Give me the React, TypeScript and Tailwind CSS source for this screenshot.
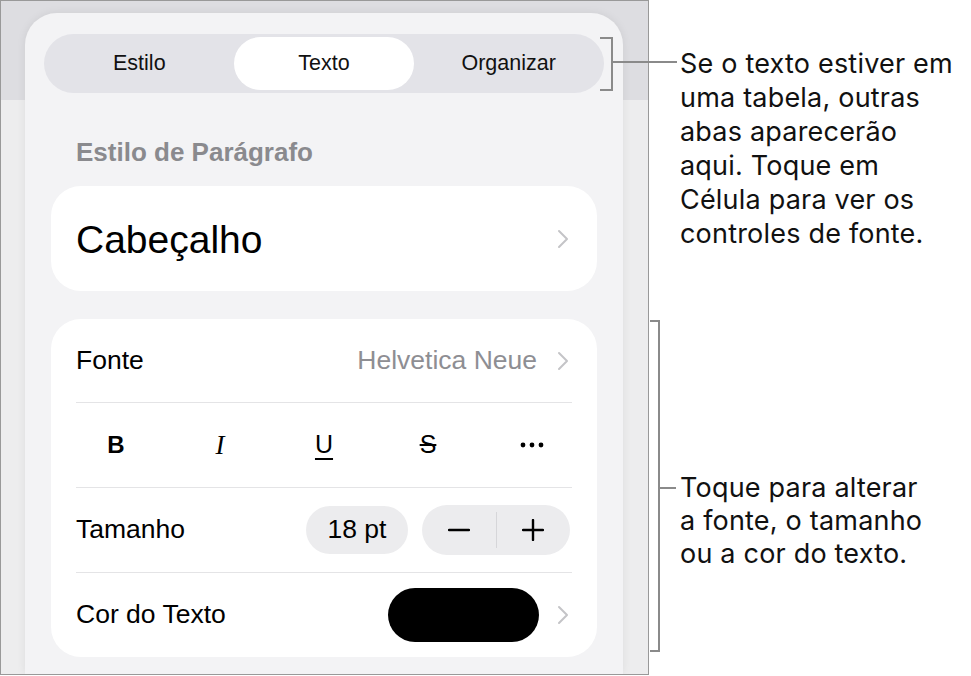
import React from 'react';

const ui = { fontFamily: '"Liberation Sans", Arial, sans-serif' };
const note = { fontFamily: 'Inter, "Noto Sans", sans-serif' };

function Chevron() {
  return (
    <svg width="12" height="20" viewBox="0 0 12 20" className="shrink-0">
      <path d="M2 2 L10 10 L2 18" fill="none" stroke="#c4c4c7" strokeWidth="2" strokeLinecap="round" strokeLinejoin="round" />
    </svg>
  );
}

function Divider() {
  return <div className="mx-[25px] h-px bg-[#e4e4e6]" />;
}

function Segmented() {
  const tabs = ['Estilo', 'Texto', 'Organizar'];
  return (
    <div className="mx-[19px] mt-[21px] grid h-[59px] grid-cols-3 rounded-full bg-[#e3e3e8] p-[3px]">
      {tabs.map((t) => (
        <div
          key={t}
          className={
            t === 'Texto'
              ? 'mx-[2px] flex items-center justify-center rounded-full bg-white text-[21.5px] text-[#111]'
              : 'flex items-center justify-center text-[21.5px] text-[#111]'
          }
        >
          {t}
        </div>
      ))}
    </div>
  );
}

function StyleButtons() {
  return (
    <div className="grid h-[84px] grid-cols-5 items-center px-[13px] text-black">
      <div className="flex justify-center text-[24px] font-bold">B</div>
      <div className="flex justify-center text-[27px] italic" style={{ fontFamily: '"Liberation Serif", serif' }}>
        I
      </div>
      <div className="flex justify-center text-[25px] underline decoration-[1.5px] underline-offset-[5px]">U</div>
      <div className="flex justify-center text-[25px] line-through decoration-[1.5px]">S</div>
      <div className="flex justify-center">
        <svg width="24" height="6" viewBox="0 0 24 6">
          <circle cx="3" cy="3" r="2.4" fill="#000" />
          <circle cx="12" cy="3" r="2.4" fill="#000" />
          <circle cx="21" cy="3" r="2.4" fill="#000" />
        </svg>
      </div>
    </div>
  );
}

function Popover() {
  return (
    <div className="ml-[24px] mt-[12px] flex w-[598px] flex-1 flex-col rounded-t-[32px] bg-[#f3f3f5] shadow-[0_0_10px_rgba(0,0,0,0.07)]">
      <Segmented />

      <div className="flex h-[93px] items-center px-[51px] pt-[25px] text-[26px] font-bold text-[#8a8a8e]">Estilo de Parágrafo</div>

      <div className="mx-[26px] flex h-[105px] items-center justify-between rounded-[30px] bg-white pl-[25px] pr-[28px]">
        <span className="pt-[4px] text-[39px] text-black">Cabeçalho</span>
        <Chevron />
      </div>

      <div className="mx-[26px] mt-[28px] rounded-[30px] bg-white text-[26.5px]">
        <div className="flex h-[83px] items-center justify-between pl-[25px] pr-[28px]">
          <span className="text-black">Fonte</span>
          <div className="flex items-center gap-[20px]">
            <span className="text-[#8e8e93]">Helvetica Neue</span>
            <Chevron />
          </div>
        </div>
        <Divider />
        <StyleButtons />
        <Divider />
        <div className="flex h-[84px] items-center justify-between pl-[25px] pr-[27px]">
          <span className="text-black">Tamanho</span>
          <div className="flex items-center gap-[14px]">
            <div className="flex h-[48px] w-[102px] items-center justify-center rounded-full bg-[#ececee] text-black">18 pt</div>
            <div className="flex h-[50px] w-[148px] items-center rounded-full bg-[#ececee]">
              <div className="flex flex-1 justify-center">
                <svg width="22" height="4" viewBox="0 0 22 4">
                  <path d="M1 2 H21" stroke="#000" strokeWidth="2.4" strokeLinecap="round" />
                </svg>
              </div>
              <div className="h-[36px] w-px bg-[#d6d6d9]" />
              <div className="flex flex-1 justify-center">
                <svg width="22" height="22" viewBox="0 0 22 22">
                  <path d="M1 11 H21 M11 1 V21" stroke="#000" strokeWidth="2.4" strokeLinecap="round" />
                </svg>
              </div>
            </div>
          </div>
        </div>
        <Divider />
        <div className="flex h-[84px] items-center justify-between pl-[25px] pr-[28px]">
          <span className="text-black">Cor do Texto</span>
          <div className="flex items-center gap-[18px]">
            <div className="h-[54px] w-[151px] rounded-full bg-black" />
            <Chevron />
          </div>
        </div>
      </div>
    </div>
  );
}

export default function App() {
  return (
    <div className="relative flex h-[676px] w-[971px] bg-white" style={ui}>
      <div className="flex h-[675px] w-[649px] shrink-0 flex-col overflow-hidden border border-[#999] bg-[linear-gradient(to_bottom,#dddde1_99px,#ededee_99px)]">
        <Popover />
      </div>

      <div className="ml-[31px] flex flex-col text-[27px] tracking-[0.2px] text-[#111]" style={note}>
        <p className="mt-[47px] leading-[34px]">
          Se o texto estiver em
          <br />
          uma tabela, outras
          <br />
          abas aparecerão
          <br />
          aqui. Toque em
          <br />
          Célula para ver os
          <br />
          controles de fonte.
        </p>
        <p className="mt-[220px] leading-[33px]">
          Toque para alterar
          <br />a fonte, o tamanho
          <br />
          ou a cor do texto.
        </p>
      </div>

      {/* callout brackets */}
      <svg className="pointer-events-none absolute left-0 top-0" width="971" height="676">
        <path d="M600 38 H612 V90 H600 M612 62 H677" fill="none" stroke="#8a8a8a" strokeWidth="2" />
        <path d="M650 321 H659 V651 H650 M659 488 H676" fill="none" stroke="#8a8a8a" strokeWidth="2" />
      </svg>
    </div>
  );
}
